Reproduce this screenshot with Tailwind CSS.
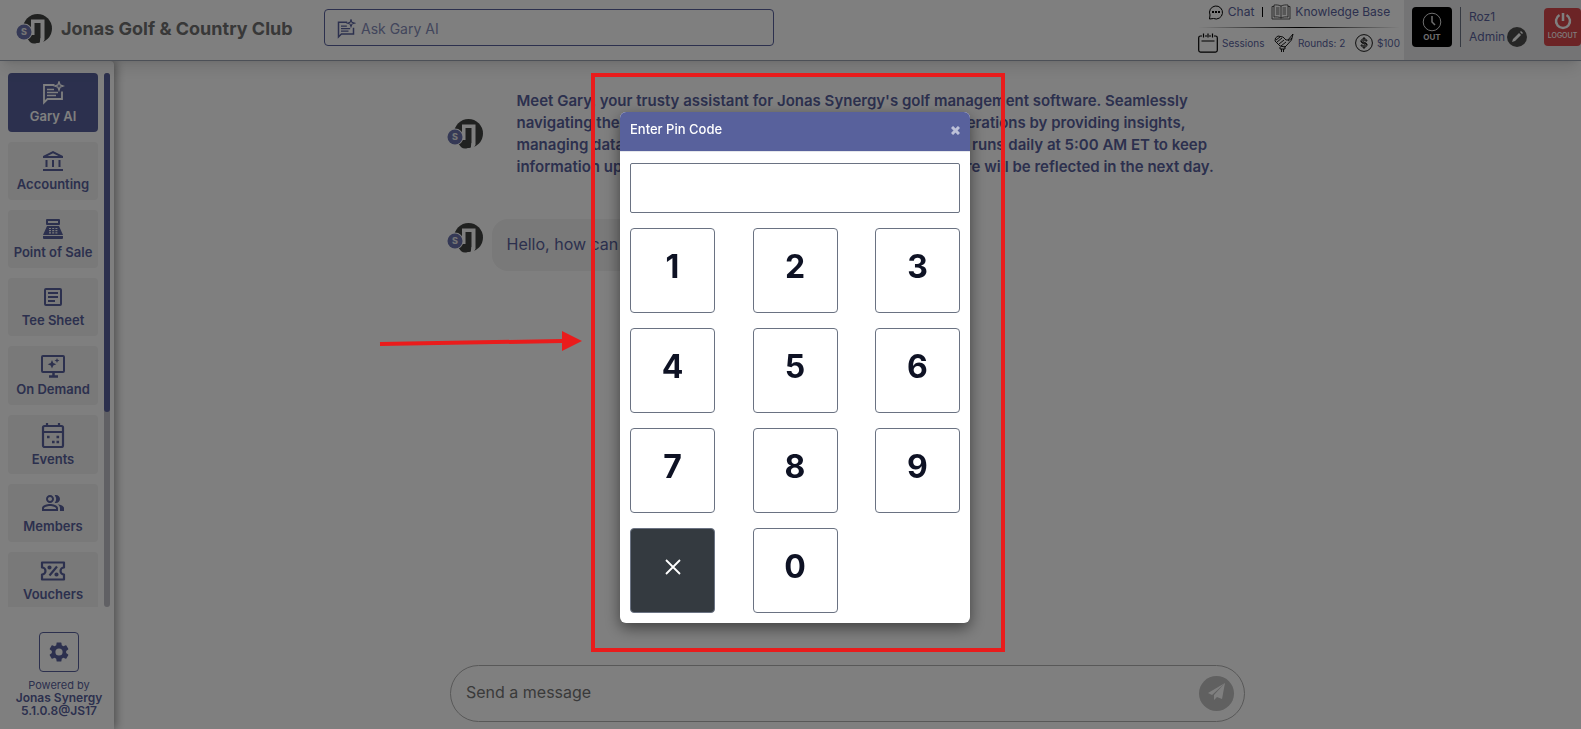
<!DOCTYPE html>
<html lang="en">

<head>
    <meta charset="UTF-8">
    <meta name="viewport" content="width=device-width, initial-scale=1.0">
    <title>Jonas Golf &amp; Country Club</title>
    <script src="https://cdn.jsdelivr.net/npm/@tailwindcss/browser@4"></script>
</head>

<body class="h-screen overflow-hidden bg-white font-['Inter',sans-serif] text-[#58619c]">
    <!-- shared drawings -->
    <svg class="hidden">
        <symbol id="logo" viewBox="0 0 36 30">
            <circle cx="21.500" cy="14.500" r="14.500" fill="#404241" />
            <path d="M15 5.500h13.500V26l-3.500 4h-1.500l1-4V9H15z" fill="#fff" />
            <path d="M15 8h3.500v13H15zM24.500 24h3V30h-4z" fill="#fff" />
            <path d="M12 25l6-4h6v4c0 3-3 4.500-6 4.500s-5-2-6-4.500z" fill="#404241" />
            <circle cx="8" cy="18" r="8.500" fill="#fff" />
            <circle cx="8" cy="18" r="7.500" fill="#6a72ad" />
            <text x="8" y="21" text-anchor="middle" font-size="9" font-weight="800" fill="#e8e8e8">S</text>
        </symbol>
        <symbol id="chat-spark" viewBox="0 0 24 24">
            <path fill="none" stroke="currentColor" stroke-width="1.800" d="M13.500 4H3v17.500L6.500 18H21v-7.500" />
            <path stroke="currentColor" stroke-width="1.600" d="M6 8.500h7M6 11.500h11M6 14.500h9" />
            <path fill="none" stroke="currentColor" stroke-width="1.300" d="M18 .8l1.100 3.100L22.200 5l-3.100 1.100L18 9.200l-1.100-3.100L13.800 5l3.100-1.100z" />
        </symbol>
    </svg>

    <div class="flex h-screen flex-col">
        <header class="relative z-10 flex h-[61px] shrink-0 items-start border-b border-gray-400 bg-white shadow-lg">
            <a href="#" class="flex items-center gap-[9px] pt-3 pl-4">
                <svg class="h-[30px] w-9"><use href="#logo" /></svg>
                <span class="w-[263px] pt-px text-lg leading-8 font-bold whitespace-nowrap text-[#707070]">Jonas Golf &amp; Country Club</span>
            </a>
            <div class="relative mt-[9px] w-[450px]">
                <svg class="absolute top-[10px] left-3 size-5"><use href="#chat-spark" /></svg>
                <input type="text" aria-label="Ask Gary AI" placeholder="Ask Gary AI"
                    class="h-[37px] w-full rounded border border-[#58619c] pt-[2px] pl-9 text-sm placeholder:text-[#858cb8]">
            </div>
            <div class="mr-1 ml-auto w-[202px]">
                <div class="flex h-[27px] items-center justify-center gap-1 pb-[3px] text-xs">
                    <a href="#" class="flex items-center gap-1">
                        <svg class="size-4 text-black" viewBox="0 0 16 16" fill="none" stroke="currentColor"><path d="M1.500 15l.5-4a6.500 6.500 0 1 1 3.500 3.500z" /><path stroke-width="2" d="M4 8h2M7 8h2M10 8h2" /></svg>
                        Chat</a>
                    <span class="mx-1 h-[10px] w-px bg-black"></span>
                    <a href="#" class="flex items-center gap-1 whitespace-nowrap">
                        <svg class="h-4 w-5 text-[#333]" viewBox="0 0 20 16" fill="none" stroke="currentColor" stroke-width=".8"><path d="M10 2C7.500.8 5 .8 3 1v12c2-.3 5-.2 7 1 2-1.200 5-1.300 7-1V1c-2-.2-4.500-.2-7 1zv12M3 2.500H1v12.500h18V2.500h-2M5 4h3.500M5 6h3.500M5 8h3.500M5 10h3.500M11.500 4H15M11.500 6H15M11.500 8H15M11.500 10H15" /></svg>
                        Knowledge Base</a>
                </div>
                <div class="h-px bg-linear-to-r from-transparent via-black to-transparent"></div>
                <div class="flex h-[30px] items-center justify-between text-[10px]">
                    <a href="#" class="flex items-center gap-1"><svg class="size-5 text-black" viewBox="0 0 20 20" fill="none" stroke="currentColor" stroke-width="1.200"><path d="M4 3H2.500a1.800 1.800 0 0 0-1.800 1.800v12.500a1.800 1.800 0 0 0 1.800 1.800h15a1.800 1.800 0 0 0 1.800-1.800V4.800A1.800 1.800 0 0 0 17.500 3H16M7 3h2M11 3h2M5.500.5v4M10 .5v4M14.500.5v4M3.500 8h13" /></svg>Sessions</a>
                    <a href="#" class="flex items-center gap-1"><svg class="size-5 text-black" viewBox="0 0 20 20" fill="none" stroke="currentColor" stroke-width=".9"><path d="M5 12L1 8l.5-3L4 3l5 1 3 3h2l5-6-1.500 6-4.500 5-2 2-5-1zM2 7l4-3M3 9l5-4M5 11l5-4M7 13l5-4M6 14v2h5v-3M7.500 16v3M9.500 16v3M14 8l4-3" /></svg>Rounds: 2</a>
                    <a href="#" class="flex items-center gap-1"><svg class="size-[18px] text-black" viewBox="0 0 18 18" fill="none" stroke="currentColor" stroke-width=".9"><circle cx="9" cy="9" r="8.400" /><path d="M12 7c0-3-6-3-6 0 0 2.500 6 1.500 6 4 0 3-6 3-6 0h1.500c0 1.500 3 1.500 3 0 0-1.500-4.500-1-4.500-4M12 7h-1.500c0-1.500-3-1.500-3 0 0 1.500 4.500 1 4.500 4M9 3v2M9 13v2" /></svg>$100</a>
                </div>
            </div>
            <div class="flex h-[60px] w-[177px] shrink-0 items-start bg-[#e9e9ea] pt-[7px] pl-2">
                <button type="button" class="flex size-10 flex-col items-center justify-center rounded bg-black text-[8px] leading-[11px] font-bold text-[#ddd]">
                    <svg class="size-5" viewBox="0 0 20 20" fill="none" stroke="currentColor"><circle cx="10" cy="10" r="8.800" /><path stroke-width="1.500" d="M10 4v6l3 3" /></svg>OUT</button>
                <div class="ml-2 h-10 border-l border-gray-500 pl-2 text-xs leading-5">
                    <div>Roz1</div>
                    <div class="flex items-center gap-[2px]">Admin
                        <button type="button" aria-label="Edit profile" class="size-5 rounded-full bg-[#4d4d4d] text-white"><svg viewBox="0 0 20 20" fill="currentColor"><path d="M6 12l6-6 2 2-6 6-3 1zM13 5l1-1 2 2-1 1z" /></svg></button>
                    </div>
                </div>
                <button type="button" class="mt-px mr-0 ml-auto flex h-[38px] w-[37px] flex-col items-center justify-center rounded bg-[#d9484c] text-[7px] leading-3 font-medium text-white">
                    <svg class="size-[18px]" viewBox="0 0 18 18" fill="none" stroke="currentColor" stroke-width="2.500"><path d="M5.500 3a7 7 0 1 0 7 0M9 1v8" /></svg>LOGOUT</button>
            </div>
        </header>

        <div class="flex min-h-0 flex-1">
            <aside class="z-0 flex w-[114px] shrink-0 flex-col rounded-tr bg-white pt-3 shadow-[2px_0_10px_rgba(0,0,0,0.4)]">
                <div class="flex h-[534px] shrink-0 gap-[6px] pl-2">
                    <nav class="flex w-[90px] flex-col gap-[10px] overflow-hidden text-[13px] leading-4 font-semibold">
                        <a href="#" class="flex h-[59px] shrink-0 flex-col items-center justify-center gap-[3px] rounded bg-[#58619c] text-white">
                            <svg class="size-6"><use href="#chat-spark" /></svg>Gary AI</a>
                        <a href="#" class="flex h-[58px] shrink-0 flex-col items-center justify-center gap-[5px] rounded bg-[#f2f2f2]">
                            <svg class="size-5" viewBox="0 0 20 20" fill="currentColor"><path d="M10 0l10 5v2H0V5zM4.500 5h11L10 2.200zM2.500 9h2v7h-2zM9 9h2v7H9zM15.500 9h2v7h-2zM0 18h20v2H0z" fill-rule="evenodd" /></svg>Accounting</a>
                        <a href="#" class="flex h-[58px] shrink-0 flex-col items-center justify-center gap-[5px] rounded bg-[#f2f2f2] whitespace-nowrap">
                            <svg class="size-5" viewBox="0 0 20 20" fill="currentColor"><path fill-rule="evenodd" d="M4 0h12a1 1 0 0 1 1 1v4a1 1 0 0 1-1 1H4a1 1 0 0 1-1-1V1a1 1 0 0 1 1-1zm1 2v2h10V2zM4 7h12l4 9H0zM0 17h20v2a1 1 0 0 1-1 1H1a1 1 0 0 1-1-1z" /><path stroke="#f2f2f2" stroke-width="1.200" stroke-dasharray="2 1.200" d="M6 9.500h8.400M6 11.700h8.400M6 13.900h8.400" /></svg>Point of Sale</a>
                        <a href="#" class="flex h-[58px] shrink-0 flex-col items-center justify-center gap-[5px] rounded bg-[#f2f2f2]">
                            <svg class="size-5" viewBox="0 0 20 20" fill="none" stroke="currentColor" stroke-width="2"><rect x="2" y="2" width="16" height="16" rx="1" /><path d="M5 6h10M5 10h10M5 14h7" /></svg>Tee Sheet</a>
                        <a href="#" class="flex h-[59px] shrink-0 flex-col items-center justify-center gap-[3px] rounded bg-[#f2f2f2] whitespace-nowrap">
                            <svg class="h-6 w-6" viewBox="0 0 24 24" fill="none" stroke="currentColor" stroke-width="2"><rect x="1" y="2" width="22" height="16" rx="1" /><path d="M8 22.500h9M12.500 18v4" stroke-width="2.500" /><path fill="currentColor" stroke="none" d="M11 6l1.300 3 3 1.300-3 1.300-1.300 3-1.300-3-3-1.300 3-1.300zM16 4l.7 1.800 1.800.7-1.800.7L16 9l-.7-1.800-1.800-.7 1.800-.7z" /></svg>On Demand</a>
                        <a href="#" class="flex h-[59px] shrink-0 flex-col items-center justify-center gap-[3px] rounded bg-[#f2f2f2]">
                            <svg class="h-[25px] w-6" viewBox="0 0 24 25" fill="none" stroke="currentColor" stroke-width="2.200"><rect x="2" y="3" width="20" height="21" rx="1.500" /><path d="M6 0v3M18 0v3M2 9h20" /><path stroke-width="2.600" d="M6 14h2.600M15.500 14h2.600M11 19h2.600M15.500 19h2.600" /></svg>Events</a>
                        <a href="#" class="flex h-[58px] shrink-0 flex-col items-center justify-center gap-[5px] rounded bg-[#f2f2f2]">
                            <svg class="h-5 w-[22px]" viewBox="1 2 22 20" fill="currentColor"><path d="M16.670 13.130C18.040 14.060 19 15.320 19 17v3h4v-3c0-2.180-3.570-3.470-6.330-3.870zM15 12c2.210 0 4-1.790 4-4s-1.790-4-4-4c-.47 0-.91.1-1.330.24a5.980 5.980 0 0 1 0 7.520c.42.14.86.24 1.330.24zM9 12c2.210 0 4-1.790 4-4s-1.790-4-4-4-4 1.790-4 4 1.790 4 4 4zm0-6c1.100 0 2 .9 2 2s-.9 2-2 2-2-.9-2-2 .9-2 2-2zM9 13c-2.670 0-8 1.340-8 4v3h16v-3c0-2.660-5.330-4-8-4zm6 5H3v-.99C3.200 16.290 6.300 15 9 15s5.800 1.290 6 2v1z" /></svg>Members</a>
                        <a href="#" class="flex h-[59px] shrink-0 flex-col items-center justify-center gap-[5px] rounded bg-[#f2f2f2]">
                            <svg class="h-5 w-[26px]" viewBox="0 0 26 20" fill="none" stroke="currentColor" stroke-width="2.200"><path stroke-linejoin="round" d="M2 1.500h22V6.500a3.500 3.500 0 0 0 0 7v5H2v-5a3.500 3.500 0 0 0 0-7zM9.500 14.500l7.500-9" /><circle cx="9.500" cy="6.500" r="1" /><circle cx="16.500" cy="13.500" r="1" /></svg>Vouchers</a>
                    </nav>
                    <div class="w-[6px] rounded-full bg-[#c1c1c9]">
                        <div class="h-[339px] rounded-full bg-[#58619c]"></div>
                    </div>
                </div>
                <div class="mt-[25px] flex w-[118px] flex-col items-center">
                    <button type="button" aria-label="Settings" class="mb-[7px] flex size-10 items-center justify-center rounded border border-[#58619c]">
                        <svg class="size-6" viewBox="0 0 24 24" fill="currentColor"><path d="M19.140 12.940c.04-.3.06-.61.06-.94 0-.32-.02-.64-.07-.94l2.030-1.580a.49.49 0 0 0 .12-.61l-1.920-3.320a.488.488 0 0 0-.59-.22l-2.390.96c-.5-.38-1.030-.7-1.620-.94l-.36-2.540a.484.484 0 0 0-.48-.41h-3.840c-.24 0-.43.17-.47.41l-.36 2.540c-.59.24-1.130.57-1.620.94l-2.390-.96c-.22-.08-.47 0-.59.22L2.740 8.870c-.12.21-.08.47.12.61l2.030 1.580c-.05.3-.09.63-.09.94s.02.64.07.94l-2.030 1.580a.49.49 0 0 0-.12.61l1.920 3.320c.12.22.37.29.59.22l2.390-.96c.5.38 1.030.7 1.620.94l.36 2.540c.05.24.24.41.48.41h3.840c.24 0 .44-.17.47-.41l.36-2.540c.59-.24 1.130-.56 1.620-.94l2.390.96c.22.08.47 0 .59-.22l1.920-3.320c.12-.22.07-.47-.12-.61l-2.010-1.580zM12 15.600A3.600 3.600 0 1 1 12 8.400a3.600 3.600 0 0 1 0 7.200z" /></svg>
                    </button>
                    <div class="text-center text-[11px] leading-3">Powered by
                        <div class="text-xs leading-[13px] font-semibold">Jonas Synergy<br>5.1.0.8@JS17</div>
                    </div>
                </div>
            </aside>

            <main class="flex flex-1 flex-col items-center">
                <div class="flex w-[802px] flex-1 flex-col pt-[29px]">
                    <div class="flex items-center gap-[34px]">
                        <svg class="h-[30px] w-9 shrink-0"><use href="#logo" /></svg>
                        <p class="text-[15px] leading-[22px] font-semibold whitespace-nowrap">Meet Gary, your trusty assistant for Jonas Synergy's golf management software. Seamlessly<br>
                            navigating the platform, Gary enhances your daily golf club operations by providing insights,<br>
                            managing data and answering questions. The club's data sync runs daily at 5:00 AM ET to keep<br>
                            information up to date, so that any new data changes made here will be reflected in the next day.</p>
                    </div>
                    <div class="mt-[41px] flex gap-[9px]">
                        <svg class="mt-1 h-[30px] w-9 shrink-0"><use href="#logo" /></svg>
                        <p class="rounded-2xl bg-[#f2f2f2] px-[15px] pt-[14px] pb-4 text-base leading-[22px]">Hello, how can I help you?</p>
                    </div>
                </div>
                <form class="mb-[7px] flex h-[57px] w-[795px] items-center rounded-full border border-[#b0b0b0] pr-[10px] pl-[15px]">
                    <input type="text" aria-label="Send a message" placeholder="Send a message" class="flex-1 pb-1 text-base outline-none placeholder:text-[#757575]">
                    <button type="submit" aria-label="Send" class="size-[35px] rounded-full bg-[#c0c0c0] text-white">
                        <svg viewBox="0 0 35 35" fill="currentColor"><path d="M26 7L9 17l4 2zM26 7L15 19v5l3-3 5 2z" /></svg>
                    </button>
                </form>
            </main>
        </div>
    </div>

    <!-- pin code dialog -->
    <div class="fixed inset-0 z-20 flex items-center justify-center bg-black/50 pt-[6px] pl-[9px]">
        <div class="z-10 w-[350px] rounded-md bg-white shadow-[0_5px_15px_rgba(0,0,0,0.5)]" role="dialog" aria-labelledby="pin_title">
            <div class="flex h-10 items-center justify-between rounded-t-md border-b border-gray-200 bg-[#58619c] px-[10px] pb-[3px] text-white">
                <h2 id="pin_title" class="text-[13px] font-medium">Enter Pin Code</h2>
                <button type="button" aria-label="Close" class="text-white/60">
                    <svg class="size-[9px]" viewBox="0 0 9 9" stroke="currentColor" stroke-width="3"><path d="M1 1l7 7M8 1L1 8" /></svg>
                </button>
            </div>
            <div class="px-[10px] pt-[11px] pb-[10px]">
                <input type="password" aria-label="Pin code" class="mb-[15px] block h-[50px] w-full rounded-xs border border-gray-500 px-3 text-2xl text-gray-900">
                <div class="grid grid-cols-[85px_85px_85px] justify-between gap-y-[15px] text-[32px] leading-none font-bold text-[#0e1224]">
                    <button type="button" class="h-[85px] rounded border border-gray-500 pb-2">1</button>
                    <button type="button" class="h-[85px] rounded border border-gray-500 pb-2">2</button>
                    <button type="button" class="h-[85px] rounded border border-gray-500 pb-2">3</button>
                    <button type="button" class="h-[85px] rounded border border-gray-500 pb-2">4</button>
                    <button type="button" class="h-[85px] rounded border border-gray-500 pb-2">5</button>
                    <button type="button" class="h-[85px] rounded border border-gray-500 pb-2">6</button>
                    <button type="button" class="h-[85px] rounded border border-gray-500 pb-2">7</button>
                    <button type="button" class="h-[85px] rounded border border-gray-500 pb-2">8</button>
                    <button type="button" class="h-[85px] rounded border border-gray-500 pb-2">9</button>
                    <button type="button" aria-label="Clear" class="flex h-[85px] items-center justify-center rounded border border-gray-500 bg-[#343a40] pb-2 text-white">
                        <svg class="size-4" viewBox="0 0 16 16" stroke="currentColor" stroke-width="1.800"><path d="M1 1l14 14M15 1L1 15" /></svg>
                    </button>
                    <button type="button" class="h-[85px] rounded border border-gray-500 pb-2">0</button>
                </div>
            </div>
        </div>
        <!-- callout marks -->
        <div class="absolute top-[73px] left-[591px] h-[579px] w-[414px] border-4 border-[#e91c1c]"></div>
        <svg class="absolute top-[329px] left-[379px] h-6 w-[204px]" viewBox="0 0 204 24"><path stroke="#e91c1c" stroke-width="4" d="M1 15l183-3" /><path fill="#e91c1c" d="M183 2l20 10-20 10z" /></svg>
    </div>
</body>

</html>
